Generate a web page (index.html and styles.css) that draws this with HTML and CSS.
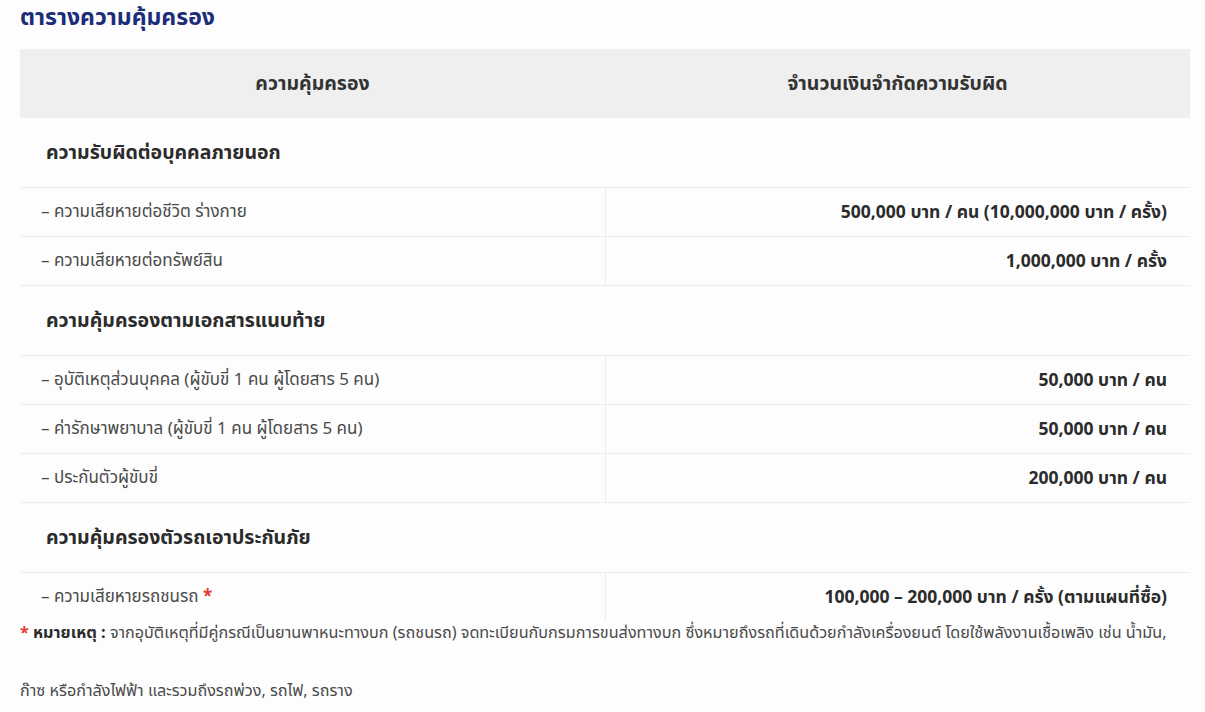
FILE: index.html
```html
<!DOCTYPE html>
<html lang="th">
<head>
<meta charset="utf-8">
<title>ตารางความคุ้มครอง</title>
<link rel="stylesheet" href="styles.css">
</head>
<body>
<div class="page">
  <h2 class="title">ตารางความคุ้มครอง</h2>
  <table class="cov">
    <thead>
      <tr><th>ความคุ้มครอง</th><th>จำนวนเงินจำกัดความรับผิด</th></tr>
    </thead>
    <tbody>
      <tr class="sec"><td colspan="2">ความรับผิดต่อบุคคลภายนอก</td></tr>
      <tr class="item"><td>– ความเสียหายต่อชีวิต ร่างกาย</td><td>500,000 บาท / คน (10,000,000 บาท / ครั้ง)</td></tr>
      <tr class="item"><td>– ความเสียหายต่อทรัพย์สิน</td><td>1,000,000 บาท / ครั้ง</td></tr>
      <tr class="sec"><td colspan="2">ความคุ้มครองตามเอกสารแนบท้าย</td></tr>
      <tr class="item"><td>– อุบัติเหตุส่วนบุคคล (ผู้ขับขี่ 1 คน ผู้โดยสาร 5 คน)</td><td>50,000 บาท / คน</td></tr>
      <tr class="item"><td>– ค่ารักษาพยาบาล (ผู้ขับขี่ 1 คน ผู้โดยสาร 5 คน)</td><td>50,000 บาท / คน</td></tr>
      <tr class="item"><td>– ประกันตัวผู้ขับขี่</td><td>200,000 บาท / คน</td></tr>
      <tr class="sec"><td colspan="2">ความคุ้มครองตัวรถเอาประกันภัย</td></tr>
      <tr class="item last"><td>– ความเสียหายรถชนรถ <span class="star">*</span></td><td>100,000 – 200,000 บาท / ครั้ง (ตามแผนที่ซื้อ)</td></tr>
    </tbody>
  </table>
  <p class="note"><span class="star">*</span> <b>หมายเหตุ :</b> จากอุบัติเหตุที่มีคู่กรณีเป็นยานพาหนะทางบก (รถชนรถ) จดทะเบียนกับกรมการขนส่งทางบก ซึ่งหมายถึงรถที่เดินด้วยกำลังเครื่องยนต์ โดยใช้พลังงานเชื้อเพลิง เช่น น้ำมัน, ก๊าซ หรือกำลังไฟฟ้า และรวมถึงรถพ่วง, รถไฟ, รถราง</p>
</div>
</body>
</html>
```

FILE: styles.css
```css
html, body {
  margin: 0;
  padding: 0;
  background: #fdfdfd;
}
body {
  font-family: "Noto Sans Thai", "Noto Sans", "DejaVu Sans", sans-serif;
  color: #333;
}
.page {
  padding: 0 15px 0 20px;
}
.title {
  margin: 0;
  padding-top: 2px;
  height: 47px;
  font-size: 23px;
  line-height: 32px;
  font-weight: 700;
  color: #1c2d7a;
}
.cov {
  width: 100%;
  border-collapse: collapse;
  table-layout: fixed;
}
.cov th {
  background: #efeff0;
  height: 69px;
  font-size: 19.5px;
  font-weight: 700;
  text-align: center;
  color: #333;
  padding: 0;
}
.cov .sec td {
  height: 69px;
  padding: 0 0 0 26px;
  font-size: 19.5px;
  font-weight: 700;
  color: #2b2b2b;
}
.cov .item td {
  height: 48px;
  border-top: 1px solid #ececec;
  padding: 0 0 0 21px;
  font-size: 17px;
  color: #4a4a4a;
}
.cov .item td + td {
  border-left: 1px solid #ececec;
  text-align: right;
  padding: 0 23px 0 0;
  font-size: 17.5px;
  font-weight: 700;
  color: #2b2b2b;
}
.cov .sec td { border-top: 1px solid #ececec; }
.cov tbody tr:first-child td { border-top: none; }
.star { color: #e53935; font-weight: 700; }
.note {
  margin: -17px 0 0;
  padding: 0;
  font-size: 16.2px;
  line-height: 58px;
  color: #4a4a4a;
}
.note b { color: #2b2b2b; }
```
